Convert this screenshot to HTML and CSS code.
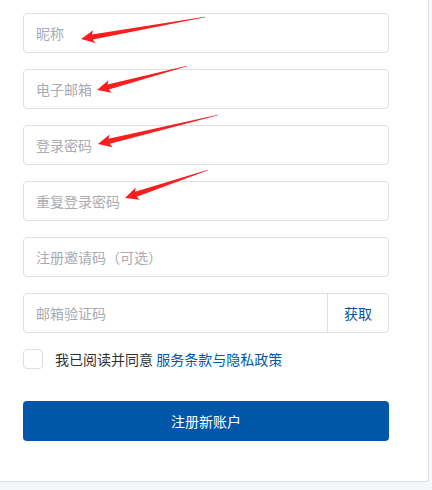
FILE: index.html
```html
<!DOCTYPE html>
<html lang="zh-CN">
<head>
<meta charset="utf-8">
<title>注册</title>
<link rel="stylesheet" href="styles.css">
</head>
<body>
<div class="card">
  <form class="form">
    <div class="field"><input class="input" placeholder="昵称"></div>
    <div class="field"><input class="input" placeholder="电子邮箱"></div>
    <div class="field"><input class="input" type="password" placeholder="登录密码"></div>
    <div class="field"><input class="input" type="password" placeholder="重复登录密码"></div>
    <div class="field"><input class="input" placeholder="注册邀请码（可选）"></div>
    <div class="field group">
      <input class="input" placeholder="邮箱验证码">
      <span class="append">获取</span>
    </div>
    <label class="agree">
      <span class="checkbox"></span>
      <span class="agree-text">我已阅读并同意 <a class="link">服务条款与隐私政策</a></span>
    </label>
    <button type="button" class="submit">注册新账户</button>
  </form>
</div>
<svg class="arrows" width="432" height="490" viewBox="0 0 432 490">
  <g fill="#fa1e1e">
    <polygon transform="translate(205 17) rotate(169.94)" points="0,-0.3 114.4,-2.6 112.4,-6.5 125.9,0 112.4,6.5 114.4,2.6 0,0.3"/>
    <polygon transform="translate(187 66) rotate(165.07)" points="0,-0.3 81.6,-2.6 79.6,-6.5 93.1,0 79.6,6.5 81.6,2.6 0,0.3"/>
    <polygon transform="translate(218 115) rotate(166.41)" points="0,-0.3 112,-2.6 110,-6.5 123.5,0 110,6.5 112,2.6 0,0.3"/>
    <polygon transform="translate(208 170) rotate(161.36)" points="0,-0.3 76.1,-2.6 74.1,-6.5 87.6,0 74.1,6.5 76.1,2.6 0,0.3"/>
  </g>
</svg>
</body>
</html>
```

FILE: styles.css
```css
html, body {
  margin: 0;
  padding: 0;
}
body {
  background: #f5f6fa;
  font-family: "Noto Sans CJK SC", "Noto Sans", sans-serif;
  font-size: 14px;
  color: #303133;
  width: 432px;
  height: 490px;
  position: relative;
  overflow: hidden;
}
.card {
  width: 429px;
  height: 482px;
  box-sizing: border-box;
  background: #fff;
  border-right: 1px solid #dcdfe6;
  border-bottom: 1px solid #dcdfe6;
  border-bottom-right-radius: 4px;
  padding: 13px 0 0 23px;
}
.form {
  width: 366px;
  display: flex;
  flex-direction: column;
  margin: 0;
}
.field {
  height: 40px;
  box-sizing: border-box;
  border: 1px solid #dcdfe6;
  border-radius: 4px;
  margin-bottom: 16px;
  display: flex;
  align-items: stretch;
  background: #fff;
}
.input {
  flex: 1;
  min-width: 0;
  border: none;
  outline: none;
  background: transparent;
  padding: 0 12px;
  margin: 0;
  font-family: "Noto Sans CJK SC", "Noto Sans", sans-serif;
  font-size: 14px;
  color: #303133;
}
.input::placeholder {
  color: #a8abb2;
}
.append {
  width: 61px;
  box-sizing: border-box;
  border-left: 1px solid #dcdfe6;
  display: flex;
  align-items: center;
  justify-content: center;
  color: #0056a8;
  font-size: 14px;
}
.agree {
  display: flex;
  align-items: center;
  height: 20px;
  gap: 12px;
  margin-bottom: 32px;
}
.checkbox {
  width: 20px;
  height: 20px;
  box-sizing: border-box;
  border: 1px solid #dcdfe6;
  border-radius: 4px;
  background: #fff;
}
.agree-text {
  color: #303133;
  font-size: 14px;
  line-height: 20px;
}
.link {
  color: #0056a8;
  text-decoration: none;
}
.submit {
  height: 40px;
  border: none;
  border-radius: 4px;
  background: #0056a8;
  color: #fff;
  font-family: "Noto Sans CJK SC", "Noto Sans", sans-serif;
  font-size: 14px;
  padding: 0;
  margin: 0;
}
.arrows {
  position: absolute;
  left: 0;
  top: 0;
  pointer-events: none;
}
```
